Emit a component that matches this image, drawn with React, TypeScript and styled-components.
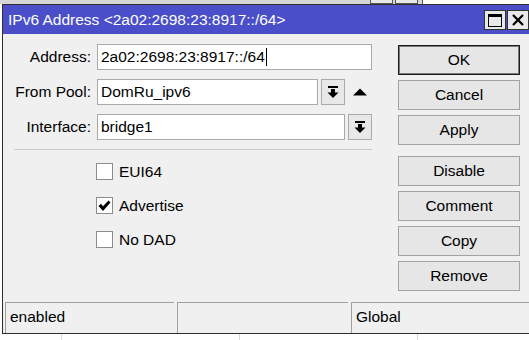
import React from 'react';
import styled, { createGlobalStyle } from 'styled-components';

const Global = createGlobalStyle`
  html, body { margin: 0; padding: 0; background: #ffffff; overflow: hidden; }
  body { font-family: "Liberation Sans", Arial, sans-serif; font-size: 15.5px; color: #000; }
  * { box-sizing: border-box; }
`;

const Desktop = styled.div`
  width: 529px;
  height: 340px;
  overflow: hidden;
  background: #ffffff;
  display: flex;
  flex-direction: column;
`;

const TopStrip = styled.div`
  height: 4px;
  display: flex;
  flex-shrink: 0;
`;

const BackWin = styled.div`
  width: 423px;
  height: 4px;
  background: #d6d6d6;
  border-right: 1px solid #555;
  display: flex;
  justify-content: flex-end;
  gap: 2px;
  padding-right: 4px;
`;

const BackBtn = styled.div`
  width: 23px;
  height: 4px;
  border: 1px solid #555;
  border-top: none;
  background: #e8e8e8;
`;

const Window = styled.div`
  margin-left: 2px;
  width: 540px;
  height: 330px;
  flex-shrink: 0;
  border: 1px solid #2e2e2e;
  background: #f0f0f0;
  display: flex;
  flex-direction: column;
`;

const TitleBar = styled.div`
  height: 29px;
  background: #4a4fc9;
  color: #fff;
  display: flex;
  align-items: center;
  padding-left: 5px;
  font-size: 15.5px;
  flex-shrink: 0;
`;

const TitleText = styled.div`
  flex: 1;
  white-space: nowrap;
`;

const TitleButtons = styled.div`
  display: flex;
  gap: 1px;
  width: 57px;
  padding-top: 1px;
`;

const TitleBtn = styled.div`
  width: 22px;
  height: 20px;
  background: #e9e9e9;
  border: 1px solid #333;
  display: flex;
  align-items: center;
  justify-content: center;
`;

const Content = styled.div`
  flex: 1;
  display: flex;
`;

const LeftPane = styled.div`
  width: 395px;
  padding-top: 10px;
  display: flex;
  flex-direction: column;
`;

const FieldRow = styled.div`
  display: grid;
  grid-template-columns: 88px 275px;
  column-gap: 6px;
  height: 26px;
  margin-bottom: 9px;
  align-items: center;
`;

const Label = styled.div`
  text-align: right;
  white-space: nowrap;
`;

const Control = styled.div`
  display: flex;
  height: 26px;
  align-items: stretch;
`;

const Combo = styled.div<{ $w?: number }>`
  display: flex;
  gap: 3px;
  width: ${(p) => (p.$w ? `${p.$w}px` : '100%')};
`;

const Input = styled.div`
  flex: 1;
  background: #fff;
  border: 1px solid #a9a9a9;
  padding-left: 3px;
  display: flex;
  align-items: center;
  white-space: nowrap;
  overflow: hidden;
`;

const Caret = styled.span`
  display: inline-block;
  width: 1px;
  height: 18px;
  background: #000;
  margin-left: 1px;
`;

const DropBtn = styled.div`
  width: 24px;
  background: #e8e8e8;
  border: 1px solid #a9a9a9;
  display: flex;
  align-items: center;
  justify-content: center;
`;

const UpCell = styled.div`
  width: 27px;
  display: flex;
  align-items: center;
  justify-content: flex-end;
  padding-right: 5px;
`;

const Separator = styled.div`
  margin: 0 0 13px 11px;
  width: 358px;
  height: 1px;
  background: #c9c9c9;
`;

const CheckRow = styled.label`
  display: flex;
  align-items: center;
  gap: 6px;
  padding-left: 93px;
  height: 17px;
  margin-bottom: 17px;
`;

const Box = styled.div`
  width: 17px;
  height: 17px;
  background: #fff;
  border: 1px solid #8c8c8c;
  display: flex;
  align-items: center;
  justify-content: center;
`;

const RightPane = styled.div`
  width: 122px;
  padding-top: 11px;
  display: flex;
  flex-direction: column;
`;

const BtnGroup = styled.div`
  display: flex;
  flex-direction: column;
  gap: 5px;
  margin-bottom: 11px;
`;

const Button = styled.div<{ $default?: boolean }>`
  height: 30px;
  background: #e6e6e6;
  border: 1px solid ${(p) => (p.$default ? '#1c1c1c' : '#a3a3a3')};
  box-shadow: ${(p) => (p.$default ? 'inset 0 0 0 1px #7a7a7a' : 'none')};
  display: flex;
  align-items: center;
  justify-content: center;
`;

const StatusBar = styled.div`
  height: 31px;
  display: flex;
  gap: 3px;
  padding-left: 2px;
  flex-shrink: 0;
`;

const StatusCell = styled.div<{ $w?: number }>`
  width: ${(p) => (p.$w ? `${p.$w}px` : 'auto')};
  flex: ${(p) => (p.$w ? '0 0 auto' : '1')};
  border-top: 1px solid #a0a0a0;
  border-left: 1px solid #a0a0a0;
  padding-left: 4px;
  padding-bottom: 2px;
  display: flex;
  align-items: center;
`;

const BelowList = styled.div`
  flex: 1;
  display: flex;
  background: #fff;
`;

const ListCol = styled.div<{ $w: number }>`
  width: ${(p) => p.$w}px;
  border-right: 1px solid #d8d8d8;
`;

const DropIcon = () => (
  <svg width="12" height="13" viewBox="0 0 12 13">
    <rect x="1" y="0" width="10" height="2" fill="#000" />
    <rect x="4" y="3" width="4" height="4" fill="#000" />
    <polygon points="0.5,6.5 11.5,6.5 6,12" fill="#000" />
  </svg>
);

const UpIcon = () => (
  <svg width="14" height="8" viewBox="0 0 14 8">
    <polygon points="0,7.5 14,7.5 7,0.5" fill="#000" />
  </svg>
);

const CheckIcon = () => (
  <svg width="13" height="12" viewBox="0 0 13 12">
    <polygon points="0.5,6 3,3.8 5,6.3 10.5,0.5 12.5,2.5 5,11" fill="#000" />
  </svg>
);

const MaxIcon = () => (
  <svg width="14" height="13" viewBox="0 0 14 13">
    <rect x="0.5" y="0.5" width="13" height="12" fill="none" stroke="#000" strokeWidth="1" />
    <rect x="0.5" y="0.5" width="13" height="2.5" fill="#000" />
  </svg>
);

const CloseIcon = () => (
  <svg width="12" height="12" viewBox="0 0 12 12">
    <path d="M1 1 L11 11 M11 1 L1 11" stroke="#000" strokeWidth="2.2" />
  </svg>
);

export default function App() {
  return (
    <>
      <Global />
      <Desktop>
        <TopStrip>
          <BackWin>
            <BackBtn />
            <BackBtn />
          </BackWin>
        </TopStrip>
        <Window>
          <TitleBar>
            <TitleText>IPv6 Address &lt;2a02:2698:23:8917::/64&gt;</TitleText>
            <TitleButtons>
              <TitleBtn><MaxIcon /></TitleBtn>
              <TitleBtn><CloseIcon /></TitleBtn>
            </TitleButtons>
          </TitleBar>
          <Content>
            <LeftPane>
              <FieldRow>
                <Label>Address:</Label>
                <Control>
                  <Input>2a02:2698:23:8917::/64<Caret /></Input>
                </Control>
              </FieldRow>
              <FieldRow>
                <Label>From Pool:</Label>
                <Control>
                  <Combo $w={248}>
                    <Input>DomRu_ipv6</Input>
                    <DropBtn><DropIcon /></DropBtn>
                  </Combo>
                  <UpCell><UpIcon /></UpCell>
                </Control>
              </FieldRow>
              <FieldRow>
                <Label>Interface:</Label>
                <Control>
                  <Combo>
                    <Input>bridge1</Input>
                    <DropBtn><DropIcon /></DropBtn>
                  </Combo>
                </Control>
              </FieldRow>
              <Separator />
              <CheckRow>
                <Box />
                EUI64
              </CheckRow>
              <CheckRow>
                <Box><CheckIcon /></Box>
                Advertise
              </CheckRow>
              <CheckRow>
                <Box />
                No DAD
              </CheckRow>
            </LeftPane>
            <RightPane>
              <BtnGroup>
                <Button $default>OK</Button>
                <Button>Cancel</Button>
                <Button>Apply</Button>
              </BtnGroup>
              <BtnGroup>
                <Button>Disable</Button>
                <Button>Comment</Button>
                <Button>Copy</Button>
                <Button>Remove</Button>
              </BtnGroup>
            </RightPane>
          </Content>
          <StatusBar>
            <StatusCell $w={169}>enabled</StatusCell>
            <StatusCell $w={171} />
            <StatusCell>Global</StatusCell>
          </StatusBar>
        </Window>
        <BelowList>
          <ListCol $w={62} />
          <ListCol $w={178} />
          <ListCol $w={178} />
        </BelowList>
      </Desktop>
    </>
  );
}
